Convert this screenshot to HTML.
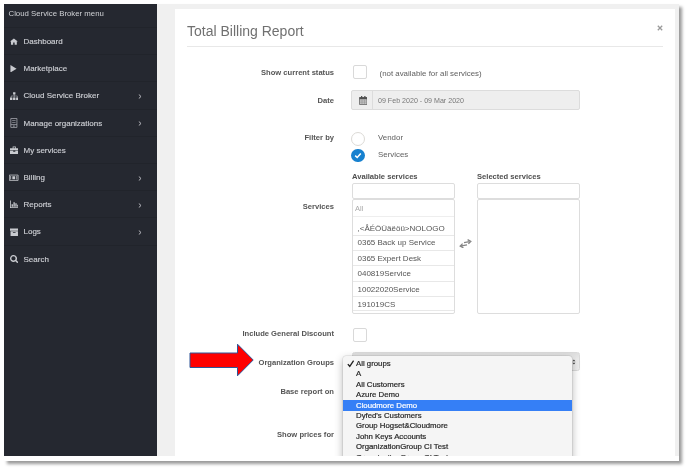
<!DOCTYPE html>
<html>
<head>
<meta charset="utf-8">
<title>Total Billing Report</title>
<style>
html,body{margin:0;padding:0;background:#fff;}
body{width:688px;height:470px;overflow:hidden;position:relative;font-family:"Liberation Sans",sans-serif;}
#shot{position:absolute;left:4px;top:4px;width:675px;height:457px;background:#fff;box-shadow:3px 3px 3px rgba(0,0,0,.4);overflow:hidden;}
#page{position:absolute;left:0;top:0;width:675px;height:452px;background:#f0f0f0;overflow:hidden;filter:blur(0.4px);}
#side{position:absolute;left:0;top:0;width:153px;height:452px;background:#252830;}
#side .hd{position:absolute;left:4.5px;top:0;height:23px;line-height:20.400px;font-size:7.8px;color:#d0d2d6;white-space:nowrap;}
#side .it{position:absolute;left:0;width:153px;height:27.2px;border-top:1px solid #21242b;box-sizing:border-box;}
#side .it span{position:absolute;left:19.5px;top:0;line-height:27.600px;font-size:8px;color:#cdcfd4;-webkit-text-stroke:0.150px currentColor;white-space:nowrap;}
#side .it svg.ic{position:absolute;left:5.5px;top:9.300px;width:8.500px;height:8.500px;fill:#c9cbd0;}
#side .it svg.ch{position:absolute;left:134px;top:11.500px;width:4px;height:5px;}
#card{position:absolute;left:171px;top:5px;width:500px;height:447px;background:#fff;}
#title{position:absolute;left:183px;top:19px;font-size:14px;line-height:16px;color:#707070;white-space:nowrap;letter-spacing:0;}
#hr{position:absolute;left:183px;top:42px;width:476px;height:1px;background:#e8e8e8;}
#close{position:absolute;left:652.700px;top:21.300px;width:6px;height:6px;}
.lb{position:absolute;right:345px;font-size:7.6px;font-weight:bold;color:#555;white-space:nowrap;line-height:10px;}
.tx{position:absolute;font-size:7.9px;color:#606060;white-space:nowrap;line-height:10px;}
.cb{position:absolute;left:349px;width:14px;height:14px;border:1px solid #d9d9d9;border-radius:2px;box-sizing:border-box;background:#fff;}
.box{position:absolute;border:1px solid #dddddd;border-radius:2px;box-sizing:border-box;background:#fff;}
.row{position:absolute;left:0;width:101px;height:15.2px;line-height:15px;font-size:8px;color:#555;border-bottom:1px solid #e8e8e8;box-sizing:border-box;padding-left:5px;white-space:nowrap;}
#dd{position:absolute;left:339px;top:352px;width:229px;height:110px;background:#f5f5f5;border-radius:3px;box-shadow:0 0 0 .5px rgba(0,0,0,.12),0 3px 8px rgba(0,0,0,.3);overflow:hidden;}
#dd div{position:absolute;left:0;width:229px;height:10.5px;line-height:10.5px;font-size:7.8px;color:#262626;-webkit-text-stroke:0.200px currentColor;padding-left:13px;box-sizing:border-box;white-space:nowrap;}
#dd div.sel{background:#357ff6;color:#fff;}
</style>
</head>
<body>
<div id="shot">
 <div id="page">
  <div id="side">
   <div class="hd">Cloud Service Broker menu</div>
   <div class="it" style="top:23px"><svg class="ic" style="width:7.800px;height:7.200px;top:10px;left:5.800px" preserveAspectRatio="none" viewBox="0 0 16 16"><path d="M8 1 L0 8 L2 8 L2 15 L6.5 15 L6.5 10 L9.5 10 L9.5 15 L14 15 L14 8 L16 8 Z"/></svg><span>Dashboard</span></div>
   <div class="it" style="top:50.2px"><svg class="ic" style="width:7px;height:7.500px;top:9.800px;left:6.200px" preserveAspectRatio="none" viewBox="0 0 16 16"><path d="M1 0 L15 8 L1 16 Z"/></svg><span>Marketplace</span></div>
   <div class="it" style="top:77.4px"><svg class="ic" viewBox="0 0 16 16"><path d="M5.800 0.500h4.400v4.400h-4.400z M0 10.500h4.500v4.500h-4.500z M5.750 10.500h4.500v4.500h-4.500z M11.500 10.500h4.500v4.500h-4.500z"/><path d="M8 4v6.500 M2.250 10.500v-3h11.500v3" fill="none" stroke="#c9cbd0" stroke-width="1"/></svg><span>Cloud Service Broker</span><svg class="ch" viewBox="0 0 5 6"><path d="M1 0.500 L3.800 3 L1 5.500" fill="none" stroke="#c9cbd0" stroke-width="1.100"/></svg></div>
   <div class="it" style="top:104.6px"><svg class="ic" style="top:8.700px;height:9.800px;left:5.800px" preserveAspectRatio="none" viewBox="0 0 16 16"><path d="M1.500 0.800h11.500v14.600h-11.500z M1.500 10.800h11.500" fill="none" stroke="#a4a6ad" stroke-width="1.400"/><path d="M5.800 12.300h3v1.800h-3z M4 3.500h6.500v1.200h-6.500z M4 6.500h6.500v1.200h-6.500z" fill="#8e9097"/></svg><span>Manage organizations</span><svg class="ch" viewBox="0 0 5 6"><path d="M1 0.500 L3.800 3 L1 5.500" fill="none" stroke="#c9cbd0" stroke-width="1.100"/></svg></div>
   <div class="it" style="top:131.8px"><svg class="ic" viewBox="0 0 16 16"><path d="M5 1h6v3h5v4h-16v-4h5z M6.500 2.500v1.500h3v-1.500z M0 9h6v2h4v-2h6v6h-16z" fill-rule="evenodd"/></svg><span>My services</span></div>
   <div class="it" style="top:159px"><svg class="ic" style="left:5px;width:9.500px;height:9.500px;top:8.800px" viewBox="0 0 17 17"><path d="M0.700 3.700h15.600v9.600h-15.600z" fill="none" stroke="#c9cbd0" stroke-width="1.400"/><path d="M6 5.800h5v5.400h-5z M2.300 5.500h1.500v6h-1.500z M13.200 5.500h1.500v6h-1.500z" fill="#c9cbd0"/></svg><span>Billing</span><svg class="ch" viewBox="0 0 5 6"><path d="M1 0.500 L3.800 3 L1 5.500" fill="none" stroke="#c9cbd0" stroke-width="1.100"/></svg></div>
   <div class="it" style="top:186.2px"><svg class="ic" viewBox="0 0 16 16"><path d="M0 1h1.500v12.500h14.500v1.500h-16z M3 8h2.500v4.500h-2.500z M6.500 4h2.500v8.500h-2.500z M10 6h2.500v6.500h-2.500z M13.500 9h2v3.500h-2z"/></svg><span>Reports</span><svg class="ch" viewBox="0 0 5 6"><path d="M1 0.500 L3.800 3 L1 5.500" fill="none" stroke="#c9cbd0" stroke-width="1.100"/></svg></div>
   <div class="it" style="top:213.4px"><svg class="ic" viewBox="0 0 16 16"><path d="M0 1h16v4h-16z M1 6h14v9h-14z M5.500 8v1.500h5v-1.500z" fill-rule="evenodd"/></svg><span>Logs</span><svg class="ch" viewBox="0 0 5 6"><path d="M1 0.500 L3.800 3 L1 5.500" fill="none" stroke="#c9cbd0" stroke-width="1.100"/></svg></div>
   <div class="it" style="top:240.600px"><svg class="ic" viewBox="0 0 16 16"><path d="M6.500 0a6.500 6.500 0 1 0 3.700 11.900l3.600 3.600 2-2-3.600-3.600a6.500 6.500 0 0 0-5.700-9.900z M6.500 2.500a4 4 0 1 1 0 8a4 4 0 0 1 0-8z" fill-rule="evenodd"/></svg><span>Search</span></div>
  </div>
  <div id="card"></div>
  <div id="title">Total Billing Report</div>
  <div id="hr"></div>
  <svg id="close" viewBox="0 0 6 6"><path d="M0.800 0.800 L5.200 5.200 M5.200 0.800 L0.800 5.200" stroke="#9a9a9a" stroke-width="1.300" fill="none"/></svg>

  <div class="lb" style="top:63.500px">Show current status</div>
  <div class="cb" style="top:61px"></div>
  <div class="tx" style="left:375.500px;top:64.500px">(not available for all services)</div>

  <div class="lb" style="top:92.300px">Date</div>
  <div class="box" style="left:347px;top:86px;width:229px;height:20px;background:#eee;border-color:#dcdcdc;"></div>
  <div style="position:absolute;left:368px;top:87px;width:1px;height:18px;background:#dcdcdc"></div>
  <svg style="position:absolute;left:354.500px;top:92px;width:8.500px;height:9px" viewBox="0 0 17 18"><path d="M1 3h15v14h-15z" fill="#c8c8c8" stroke="#666" stroke-width="1.600"/><path d="M1 2.500h15v4h-15z M4 0h2.500v4h-2.500z M10.500 0h2.500v4h-2.500z" fill="#505050"/><path d="M1 10h15 M1 13.500h15 M6 7v10 M11 7v10" stroke="#888" stroke-width="0.900" fill="none"/></svg>
  <div class="tx" style="left:374px;top:91.700px;font-size:7.100px;color:#777">09 Feb 2020 - 09 Mar 2020</div>

  <div class="lb" style="top:129.300px">Filter by</div>
  <div style="position:absolute;left:347px;top:127.500px;width:14px;height:14px;border-radius:50%;border:1px solid #dcdad6;box-sizing:border-box;background:#fff"></div>
  <div class="tx" style="left:374px;top:129.3px">Vendor</div>
  <div style="position:absolute;left:347.300px;top:144.700px;width:13.500px;height:13.500px;border-radius:50%;background:#1781cf"></div>
  <svg style="position:absolute;left:350.100px;top:148px;width:8px;height:7px" viewBox="0 0 8 7"><path d="M1.200 3.600 L3.200 5.500 L6.800 1.500" stroke="#fff" stroke-width="1.500" fill="none"/></svg>
  <div class="tx" style="left:374px;top:146.200px">Services</div>

  <div class="tx" style="left:348px;top:167.500px;font-weight:bold;font-size:7.600px;color:#4f4f4f">Available services</div>
  <div class="tx" style="left:473px;top:167.500px;font-weight:bold;font-size:7.600px;color:#4f4f4f">Selected services</div>
  <div class="lb" style="top:198px">Services</div>
  <div class="box" style="left:347.500px;top:179px;width:103px;height:16px"></div>
  <div class="box" style="left:473px;top:179px;width:103px;height:16px"></div>
  <div class="box" style="left:347.500px;top:195px;width:103px;height:115px;overflow:hidden">
    <div class="row" style="top:0;height:16.5px;line-height:17px;color:#aaa;font-size:7.5px;padding-left:2.5px;border-bottom-color:#eee">All</div>
    <div class="row" style="top:16.5px;height:19.1px;line-height:23px">,&lt;ÅÉÖÜäëöü&gt;NOLOGO</div>
    <div class="row" style="top:35.6px;height:15.4px;line-height:14.8px">0365 Back up Service</div>
    <div class="row" style="top:51px;height:15px;line-height:16px">0365 Expert Desk</div>
    <div class="row" style="top:66px;height:15.5px;line-height:15.6px">040819Service</div>
    <div class="row" style="top:81.500px;height:15.3px;line-height:15.2px">10022020Service</div>
    <div class="row" style="top:96.800px;height:14.5px;line-height:15.4px">191019CS</div>
  </div>
  <div class="box" style="left:473px;top:195px;width:103px;height:115px"></div>
  <svg style="position:absolute;left:455px;top:234.5px;width:13px;height:9.500px" viewBox="0 0 13 9.500"><path d="M5 3.600 L10.500 2.600 M8.600 0.600 L11.800 2.400 L9.400 4.900" stroke="#858585" stroke-width="1.300" fill="none"/><path d="M8 5.800 L2.500 6.800 M4.400 8.900 L1.200 7 L3.600 4.600" stroke="#858585" stroke-width="1.300" fill="none"/></svg>

  <div class="lb" style="top:324.800px">Include General Discount</div>
  <div class="cb" style="top:323.500px"></div>

  <div class="lb" style="top:353.800px">Organization Groups</div>
  <div class="box" style="left:348px;top:348.200px;width:227.700px;height:18.800px;background:linear-gradient(#dedede,#ebebeb 35%,#eeeeee);border-color:#dadada;border-radius:2.500px"></div>
  <svg style="position:absolute;left:567.900px;top:355px;width:3.800px;height:6px" viewBox="0 0 5 8"><path d="M0.500 3 L2.500 0.600 L4.500 3 Z M0.500 5 L2.500 7.400 L4.500 5 Z" fill="#444"/></svg>
  <div class="lb" style="top:382.600px">Base report on</div>
  <div class="lb" style="top:425.700px">Show prices for</div>

  <svg style="position:absolute;left:184px;top:338px;width:68px;height:36px" viewBox="0 0 68 36"><path d="M2 11 L49.500 11 L49.500 2.200 L65.200 18 L49.500 33.800 L49.500 25.500 L2 25.500 Z" fill="#fe0000" stroke="#2f5597" stroke-width="1"/></svg>

  <div id="dd">
    <div style="top:2.600px">All groups</div>
    <svg style="position:absolute;left:3.500px;top:4px;width:7.500px;height:7.500px" viewBox="0 0 7 7"><path d="M0.800 3.800 L2.600 6 L6.200 0.600" stroke="#222" stroke-width="1.300" fill="none"/></svg>
    <div style="top:13px">A</div>
    <div style="top:23.500px">All Customers</div>
    <div style="top:33.500px">Azure Demo</div>
    <div class="sel" style="top:44px;line-height:11.200px">Cloudmore Demo</div>
    <div style="top:54.500px">Dyfed's Customers</div>
    <div style="top:65px">Group Hogset&amp;Cloudmore</div>
    <div style="top:75.500px">John Keys Accounts</div>
    <div style="top:86px">OrganizationGroup CI Test</div>
    <div style="top:96.500px">OrganizationGroup CI Test</div>
  </div>
 </div>
</div>
</body>
</html>
